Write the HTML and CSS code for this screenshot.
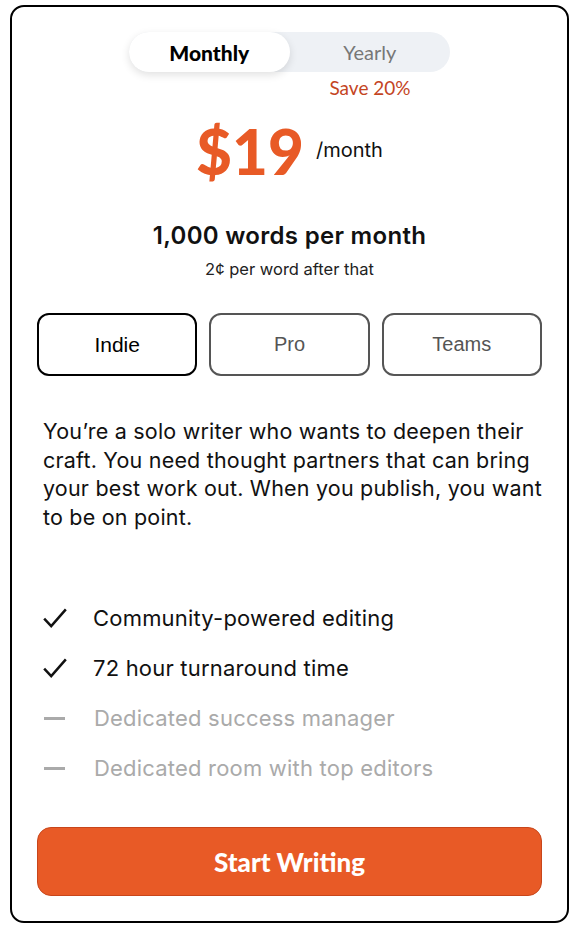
FILE: index.html
```html
<!DOCTYPE html>
<html lang="en">

<head>
    <meta charset="UTF-8">
    <title>Pricing</title>
    <link rel="stylesheet" href="styles.css">
</head>

<body>
    <div class="card">
        <div class="billing">
            <div class="toggle">
                <button type="button" class="toggle_btn active">Monthly</button>
                <button type="button" class="toggle_btn">Yearly</button>
            </div>
            <div class="save">Save 20%</div>
        </div>

        <div class="price">
            <span class="amount">$19</span>
            <span class="per">/month</span>
        </div>

        <div class="words">1,000 words per month</div>
        <div class="extra">2¢ per word after that</div>

        <div class="plans">
            <button type="button" class="plan selected">Indie</button>
            <button type="button" class="plan">Pro</button>
            <button type="button" class="plan">Teams</button>
        </div>

        <p class="desc">You’re a solo writer who wants to deepen their craft. You need thought partners that can bring your best work out. When you publish, you want to be on point.</p>

        <ul class="features">
            <li>
                <svg class="icon" viewBox="0 0 24 24" width="26" height="26"><path d="M2 12.5l6.5 7L22 4" fill="none" stroke="#111" stroke-width="2.3"/></svg>
                Community-powered editing
            </li>
            <li>
                <svg class="icon" viewBox="0 0 24 24" width="26" height="26"><path d="M2 12.5l6.5 7L22 4" fill="none" stroke="#111" stroke-width="2.3"/></svg>
                72 hour turnaround time
            </li>
            <li class="off">
                <span class="dash"></span>
                Dedicated success manager
            </li>
            <li class="off">
                <span class="dash"></span>
                Dedicated room with top editors
            </li>
        </ul>

        <button type="button" class="start">Start Writing</button>
    </div>
</body>

</html>
```

FILE: styles.css
```css
* {
    box-sizing: border-box;
}

body {
    margin: 0;
    background: #fff;
    font-family: "Inter", "Liberation Sans", sans-serif;
    color: #111;
}

.card {
    width: 559px;
    height: 918px;
    margin: 5px 0 0 10px;
    border: 2px solid #000;
    border-radius: 14px;
    padding: 25px 25px 0;
    display: flex;
    flex-direction: column;
    align-items: center;
}

.billing {
    display: flex;
    flex-direction: column;
    align-items: center;
}

.toggle {
    width: 321px;
    height: 40px;
    background: #eef1f5;
    border-radius: 20px;
    display: flex;
}

.toggle_btn {
    flex: 1;
    border: none;
    background: transparent;
    border-radius: 20px;
    font-family: "Lato", sans-serif;
    font-size: 20px;
    color: #777;
}

.toggle_btn.active {
    background: #fff;
    color: #000;
    font-weight: 900;
    font-size: 21px;
    box-shadow: 0 3px 8px rgba(0, 0, 0, 0.12);
}

.save {
    align-self: flex-end;
    width: 160px;
    text-align: center;
    margin-top: 4px;
    font-family: "Lato", sans-serif;
    font-size: 19px;
    color: #c4451f;
}

.price {
    display: flex;
    align-items: center;
    margin-top: 12px;
}

.amount {
    font-family: "Lato", sans-serif;
    font-weight: 900;
    font-size: 62px;
    color: #e85a26;
    line-height: 80px;
}

.per {
    margin-left: 12px;
    font-size: 20px;
    color: #111;
    margin-bottom: 2px;
}

.words {
    margin-top: 30px;
    font-size: 24px;
    font-weight: 600;
    letter-spacing: 0.3px;
}

.extra {
    margin-top: 9px;
    font-size: 16.5px;
    color: #222;
}

.plans {
    width: 100%;
    display: grid;
    grid-template-columns: 1fr 1fr 1fr;
    gap: 12px;
    margin-top: 34px;
}

.plan {
    height: 63px;
    border: 2px solid #555;
    border-radius: 12px;
    background: #fff;
    font-family: "Liberation Sans", Arial, sans-serif;
    font-size: 20px;
    color: #555;
}

.plan.selected {
    border-color: #000;
    color: #000;
    font-size: 21px;
}

.desc {
    align-self: stretch;
    margin: 41px 0 0 6px;
    font-size: 21.5px;
    line-height: 28.5px;
    letter-spacing: 0.2px;
    color: #111;
}

.features {
    list-style: none;
    align-self: stretch;
    margin: 62px 0 0 5px;
    padding: 0;
}

.features li {
    display: flex;
    align-items: center;
    height: 50px;
    font-size: 22px;
    letter-spacing: 0.2px;
    color: #111;
}

.features li.off {
    color: #aaa;
}

.icon {
    width: 26px;
    margin-right: 25px;
}

.dash {
    display: inline-block;
    width: 21px;
    height: 3px;
    background: #aaa;
    margin: 0 29px 0 2px;
}

.start {
    width: 100%;
    height: 69px;
    margin-top: 34px;
    border: 1px solid #c8461b;
    border-radius: 14px;
    background: #e85a26;
    color: #fff;
    font-family: "Lato", sans-serif;
    font-weight: 900;
    font-size: 26px;
}
```
